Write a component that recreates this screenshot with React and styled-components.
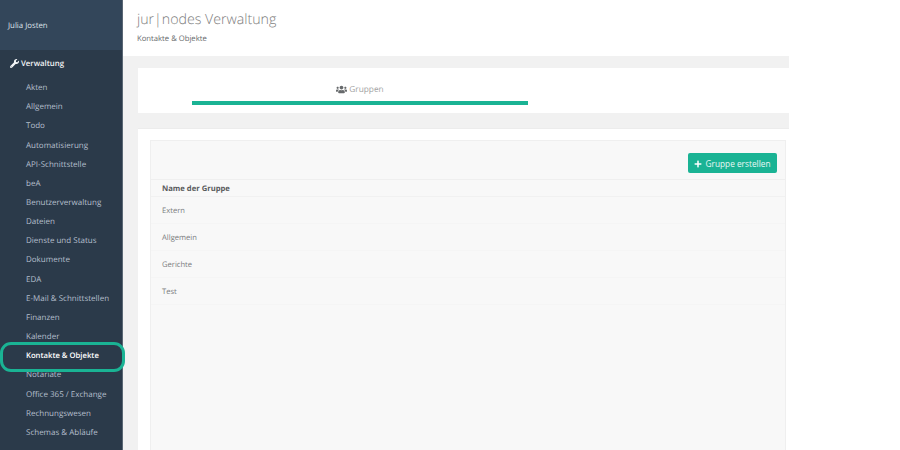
import React from 'react'
import styled, { createGlobalStyle } from 'styled-components'
import { FaWrench, FaUsers, FaPlus } from 'react-icons/fa'

const GlobalStyle = createGlobalStyle`
  html, body {
    margin: 0;
    height: 100%;
    overflow: hidden;
    background: #fff;
    font-family: "Open Sans", "Liberation Sans", sans-serif;
    text-rendering: geometricPrecision;
  }
  * { box-sizing: border-box; }
`

const Page = styled.div`
  display: flex;
  width: 900px;
  height: 450px;
  overflow: hidden;
`

const Sidebar = styled.aside`
  position: relative;
  width: 123px;
  height: 450px;
  flex: none;
  background: #2b3a4a;
  border-right: 1px solid #5a6774;
`

const UserBox = styled.div`
  display: flex;
  align-items: center;
  height: 50px;
  padding: 1px 0 0 8px;
  background: #33465a;
  color: #dfe4ea;
  font-size: 7.8px;
`

const SectionHead = styled.div`
  display: flex;
  align-items: center;
  gap: 2px;
  height: 27px;
  padding-left: 10px;
  color: #f3f5f7;
  font-size: 7.8px;
  font-weight: 600;

  svg { font-size: 9px; }
`

const NavList = styled.ul`
  list-style: none;
  margin: 0;
  padding: 1px 0 0;
`

const NavItem = styled.li`
  display: flex;
  align-items: center;
  height: 19.17px;
  padding-left: 26px;
  font-size: ${p => (p.$active ? '7.7px' : '8px')};
  white-space: nowrap;
  color: ${p => (p.$active ? '#ffffff' : '#b4bfcc')};
  font-weight: ${p => (p.$active ? 600 : 400)};
`

const Highlight = styled.div`
  position: absolute;
  left: 0;
  top: 342px;
  width: 125px;
  height: 30px;
  border: 3px solid #1ab394;
  border-radius: 11px;
`

const Main = styled.main`
  width: 666px;
  flex: none;
  background: #f1f1f1;
`

const Header = styled.header`
  height: 56px;
  padding: 10px 0 0 14px;
  background: #fff;
`

const Title = styled.h1`
  margin: 0;
  color: #7d7d7d;
  font-size: 14.2px;
  line-height: 20px;
  font-weight: 300;
`

const Subtitle = styled.div`
  margin-top: 3px;
  color: #676a6c;
  font-size: 7.7px;
  line-height: 12px;
`

const TabPanel = styled.div`
  height: 45px;
  margin: 12px 0 0 15px;
  padding-left: 54px;
  background: #fff;
`

const Tab = styled.div`
  display: flex;
  align-items: center;
  justify-content: center;
  gap: 2px;
  width: 336px;
  height: 37px;
  padding-top: 9px;
  border-bottom: 4px solid #1ab394;
  color: #a3a3a3;
  font-size: 8.3px;

  svg { color: #676a6c; font-size: 11px; }
`

const ContentPanel = styled.section`
  height: 322px;
  margin: 15px 0 0 15px;
  padding: 11px 3px 0 12px;
  background: #fff;
  border-top: 1px solid #ececec;
`

const GroupCard = styled.div`
  height: 310px;
  background: #f8f8f8;
  border: 1px solid #efefef;
  border-bottom: none;
`

const CardToolbar = styled.div`
  display: flex;
  justify-content: flex-end;
  align-items: flex-start;
  height: 39px;
  padding: 12px 8px 0 0;
  border-bottom: 1px solid #efefef;
`

const CreateButton = styled.button`
  display: flex;
  align-items: center;
  justify-content: center;
  gap: 3px;
  width: 89px;
  height: 20px;
  padding: 1px 0 0;
  background: #1ab394;
  border: none;
  border-radius: 2px;
  color: #e8f8f5;
  font-family: inherit;
  font-size: 8.3px;

  svg { font-size: 8px; color: #fff; }
`

const TableHead = styled.div`
  display: flex;
  align-items: center;
  height: 17px;
  padding: 1px 0 0 11px;
  border-bottom: 1px solid #f1f1f1;
  color: #585a5c;
  font-size: 7.65px;
  font-weight: 700;
`

const GroupRow = styled.div`
  display: flex;
  align-items: center;
  height: 27px;
  padding: 2px 0 0 11px;
  border-bottom: 1px solid #f5f5f5;
  color: #7a7c7e;
  font-size: 7.6px;
`

const navItems = [
  'Akten', 'Allgemein', 'Todo', 'Automatisierung', 'API-Schnittstelle', 'beA',
  'Benutzerverwaltung', 'Dateien', 'Dienste und Status', 'Dokumente', 'EDA',
  'E-Mail & Schnittstellen', 'Finanzen', 'Kalender', 'Kontakte & Objekte',
  'Notariate', 'Office 365 / Exchange', 'Rechnungswesen', 'Schemas & Abläufe',
]

const groups = ['Extern', 'Allgemein', 'Gerichte', 'Test']

export default function App() {
  return (
    <>
      <GlobalStyle />
      <Page>
        <Sidebar>
          <UserBox>Julia Josten</UserBox>
          <SectionHead><FaWrench /> Verwaltung</SectionHead>
          <NavList>
            {navItems.map(item => (
              <NavItem key={item} $active={item === 'Kontakte & Objekte'}>{item}</NavItem>
            ))}
          </NavList>
          <Highlight />
        </Sidebar>
        <Main>
          <Header>
            <Title>jur|nodes Verwaltung</Title>
            <Subtitle>Kontakte & Objekte</Subtitle>
          </Header>
          <TabPanel>
            <Tab><FaUsers /> Gruppen</Tab>
          </TabPanel>
          <ContentPanel>
            <GroupCard>
              <CardToolbar>
                <CreateButton><FaPlus /> Gruppe erstellen</CreateButton>
              </CardToolbar>
              <TableHead>Name der Gruppe</TableHead>
              {groups.map(group => (
                <GroupRow key={group}>{group}</GroupRow>
              ))}
            </GroupCard>
          </ContentPanel>
        </Main>
      </Page>
    </>
  )
}
